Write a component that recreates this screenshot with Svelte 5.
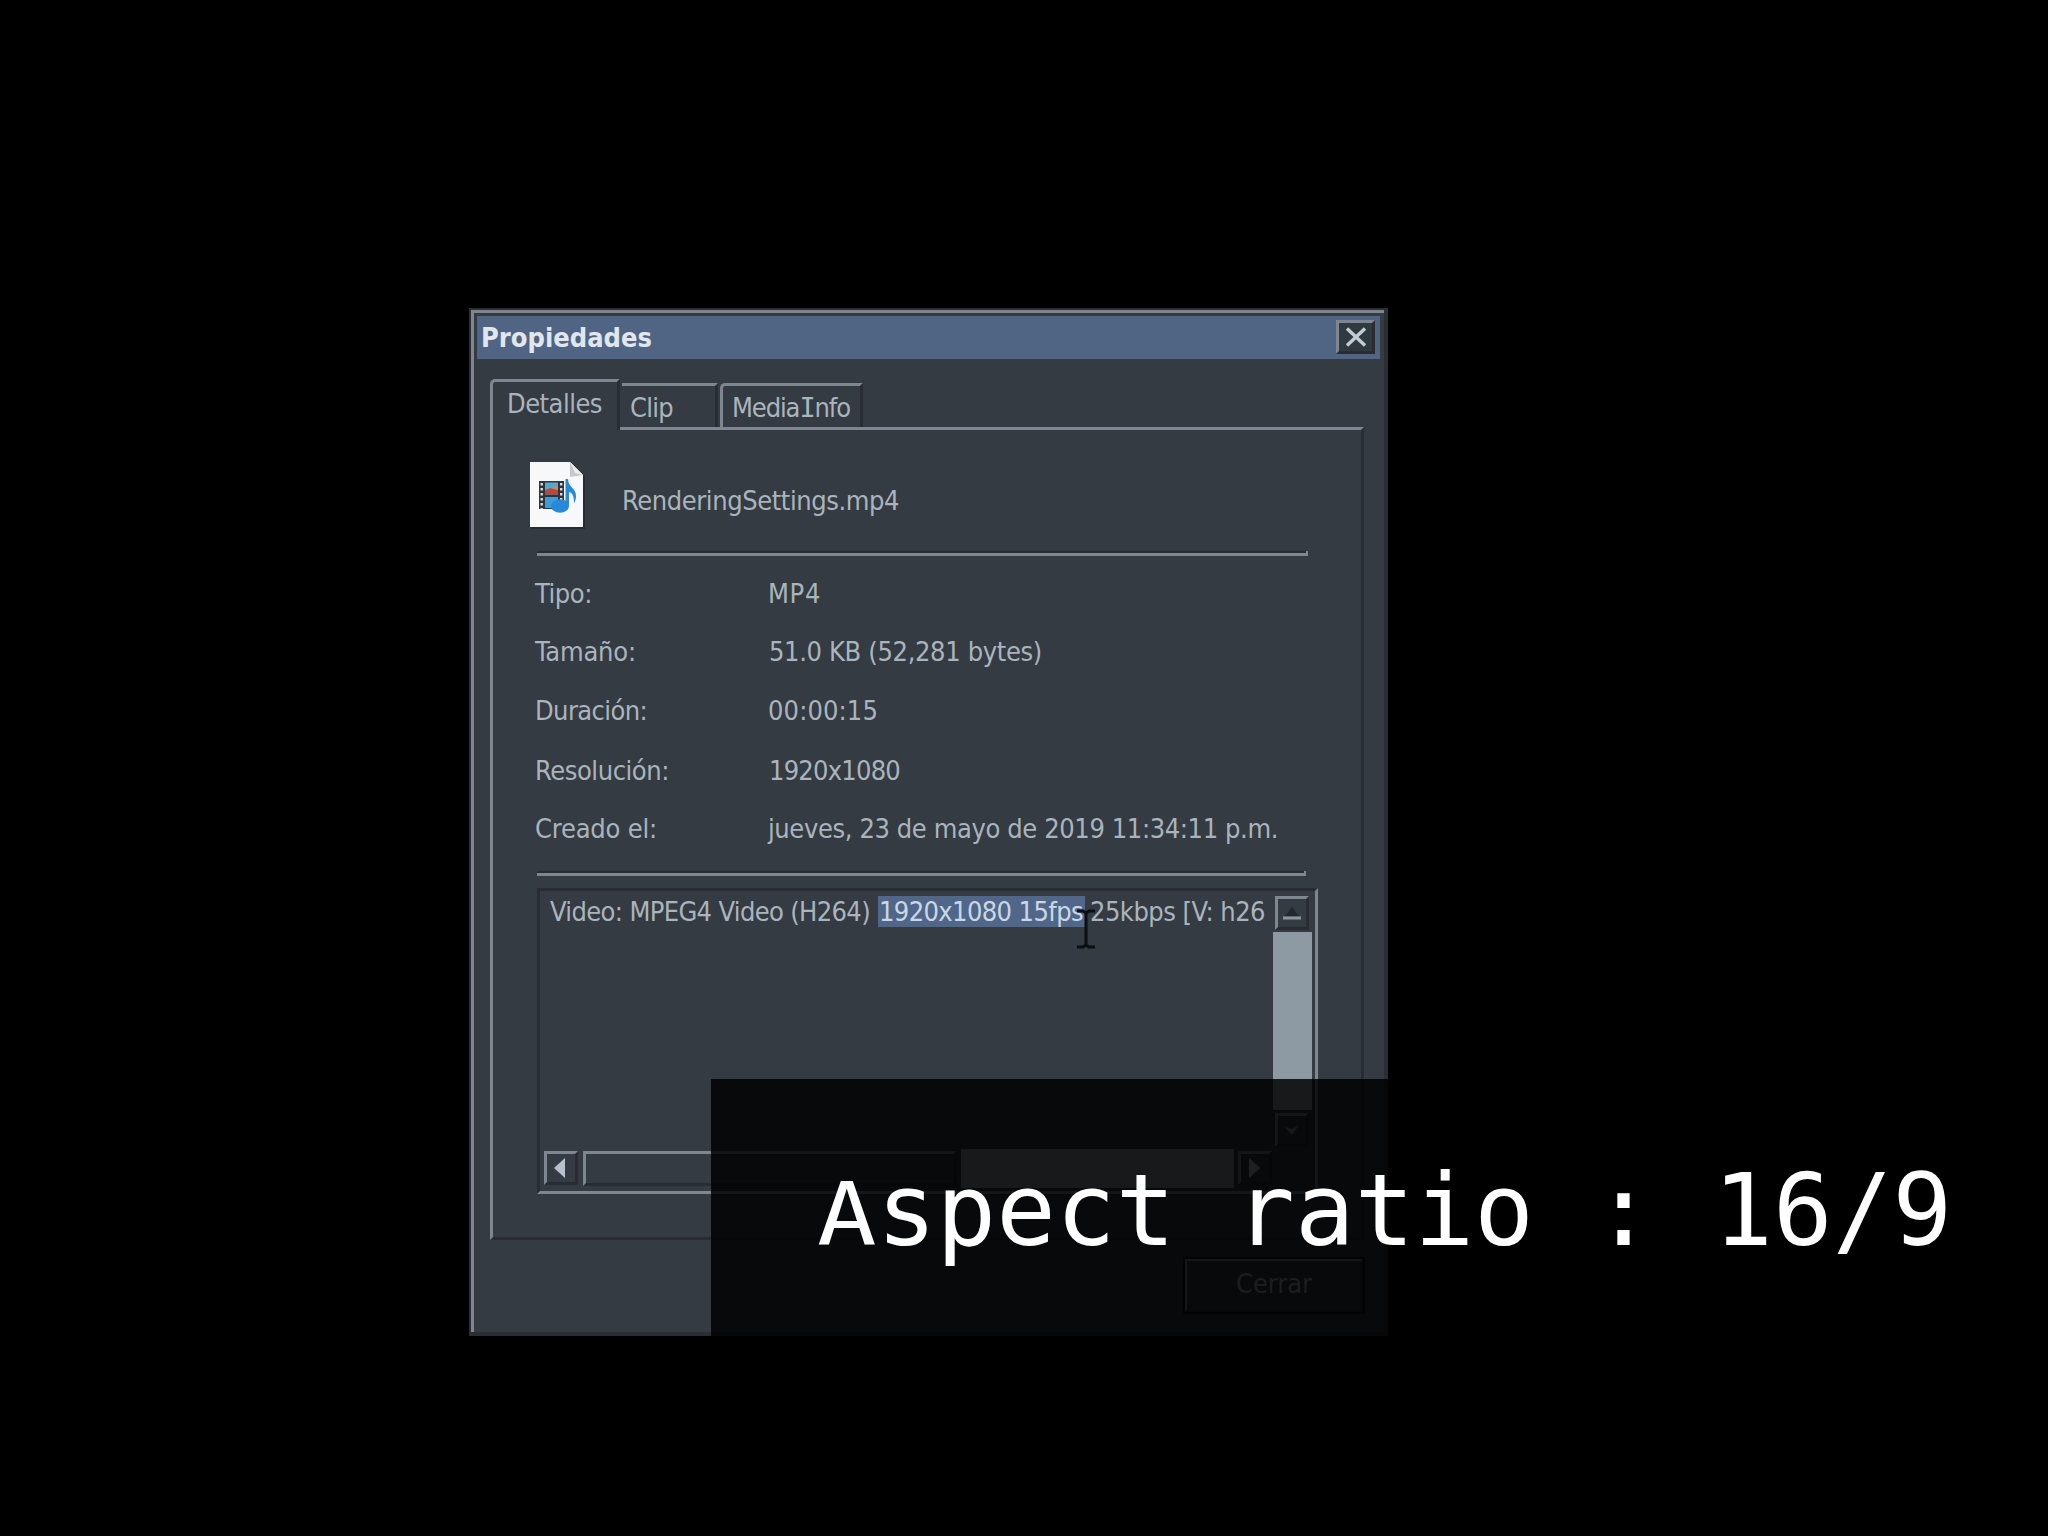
<script>
  const rows = [
    { label: 'Tipo:', lw: 57, value: 'MP4', vw: 53, inset: false, height: 58 },
    { label: 'Tamaño:', lw: 101, value: '51.0 KB (52,281 bytes)', vw: 273, inset: true, height: 59 },
    { label: 'Duración:', lw: 112, value: '00:00:15', vw: 110, inset: false, height: 60 },
    { label: 'Resolución:', lw: 134, value: '1920x1080', vw: 131, inset: true, height: 58 },
    { label: 'Creado el:', lw: 122, value: 'jueves, 23 de mayo de 2019 11:34:11 p.m.', vw: 510, inset: false, height: 57 }
  ];

  // Spreads the letters so that the text takes the given advance width.
  function fit(node, width) {
    const count = node.textContent.length;
    node.style.letterSpacing = '0px';
    const natural = node.getBoundingClientRect().width;
    node.style.letterSpacing = `${(width - natural) / count}px`;
  }
</script>

<main class="stage">
  <section class="window">
    <div class="frame">
      <header class="titlebar">
        <strong use:fit={171}>Propiedades</strong>
        <button class="close" aria-label="Cerrar ventana">
          <svg width="22" height="20" viewBox="0 0 22 20">
            <path d="M2 1.5 20 18.5M20 1.5 2 18.5" stroke="#c3ccd6" stroke-width="3.4" />
          </svg>
        </button>
      </header>

      <nav class="tabs">
        <div class="tab active"><span use:fit={95}>Detalles</span></div>
        <div class="tab clip"><span use:fit={43}>Clip</span></div>
        <div class="tab media"><span use:fit={118}>Media<span class="serif">I</span>nfo</span></div>
      </nav>

      <div class="panel">
        <div class="file">
          <svg class="file-icon" width="58" height="70" viewBox="0 0 58 70">
            <path d="M2 2H43L56 15V68H2Z" fill="#20262c" opacity=".7" />
            <path d="M1 1H41L54 14V66H1Z" fill="#f7f8f9" />
            <path d="M41 1 54 14 41 16Z" fill="#c5c8cb" />
            <path d="M41 1 54 14 46 12Z" fill="#ecedee" />
            <rect x="10" y="20" width="25" height="28" fill="#30353b" />
            <rect x="16" y="21.5" width="13" height="12" fill="#55a9cf" />
            <path d="M16 29 21 27 29 29V33.5H16Z" fill="#b9483c" />
            <path d="M22 27 29 25V29Z" fill="#d58a4a" />
            <rect x="16" y="36" width="13" height="11" fill="#3f9bdc" />
            <path d="M12.7 22V48M32.2 22V40" stroke="#d9dcde" stroke-width="2.4" stroke-dasharray="2.5 2.5" />
            <ellipse cx="31" cy="45" rx="9" ry="6.8" fill="#2789d8" />
            <path d="M36.5 46V18H39C39 26 47 27 47 35C47 38 46 41 45 42C45 36 44 32 40 31V46Z" fill="#2789d8" />
          </svg>
          <span class="filename"><span use:fit={277}>RenderingSettings.mp4</span></span>
        </div>

        <div class="rule"></div>

        <div class="details">
          {#each rows as row}
            <div class="row" style="height: {row.height}px">
              <div class="label"><span use:fit={row.lw}>{row.label}</span></div>
              <div class:nudged={row.inset}><span use:fit={row.vw}>{row.value}</span></div>
            </div>
          {/each}
        </div>

        <div class="rule second"></div>

        <div class="textbox">
          <div class="line">
            <span class="before"><span use:fit={320}>Video: MPEG4 Video (H264)</span></span>
            <mark><span use:fit={204}>1920x1080 15fps</span></mark>
            <span class="after"><span use:fit={175}>25kbps [V: h26</span></span>
          </div>
          <div class="vscroll">
            <div class="arrow">
              <svg width="20" height="16" viewBox="0 0 20 16">
                <path d="M3 11 10 2 17 11Z" fill="#23282f" />
                <path d="M1 13H19" stroke="#8d969e" stroke-width="3" />
              </svg>
            </div>
            <div class="vthumb"></div>
            <div class="arrow">
              <svg width="20" height="16" viewBox="0 0 20 16">
                <path d="M3 5 10 13 17 3 10 7Z" fill="#8d969e" />
              </svg>
            </div>
          </div>
          <div class="hscroll">
            <div class="arrow">
              <svg width="14" height="20" viewBox="0 0 14 20"><path d="M12 0V20L1 10Z" fill="#b7c1cd" /></svg>
            </div>
            <div class="track"></div>
            <div class="hthumb"></div>
            <div class="arrow">
              <svg width="14" height="20" viewBox="0 0 14 20"><path d="M2 0V20L13 10Z" fill="#b7c1cd" /></svg>
            </div>
          </div>
        </div>
      </div>

      <footer>
        <button class="dismiss"><span use:fit={76}>Cerrar</span></button>
      </footer>
    </div>
  </section>

  <svg class="cursor" width="20" height="40" viewBox="0 0 20 40">
    <path d="M1 2H7L10 4L13 2H19M10 3V37M1 38H7L10 36L13 38H19" fill="none" stroke="#0b0f13" stroke-width="3" />
  </svg>

  <div class="caption"><span class="cap">A</span>spect ratio : 16/9</div>
</main>

<style>
  :global(body) {
    background: #000;
    overflow: hidden;
  }

  * {
    box-sizing: border-box;
  }

  .stage {
    --face: #343b43;
    --light: #7e8790;
    --dark: #292c32;
    position: relative;
    width: 2048px;
    height: 1536px;
    padding: 308px 0 0 469px;
    background: #000;
    color: #aab4bc;
    font: 27px/30px 'DejaVu Sans Condensed', 'DejaVu Sans', sans-serif;
    overflow: hidden;
  }

  span,
  strong {
    white-space: nowrap;
  }

  .window {
    width: 919px;
    height: 1028px;
    border: solid #2b2f34;
    border-width: 2px 4px 4px 2px;
  }

  .frame {
    height: 100%;
    border: solid var(--light);
    border-width: 3px 0 0 3px;
    background: var(--face);
    display: flex;
    flex-direction: column;
  }

  button {
    padding: 0;
    font: inherit;
    color: inherit;
    border: solid;
    border-radius: 0;
    background: var(--face);
    border-color: var(--light) var(--dark) var(--dark) var(--light);
  }

  .titlebar {
    height: 43px;
    margin: 3px 4px 0 3px;
    padding: 0 5px 0 4px;
    background: #506584;
    display: flex;
    justify-content: space-between;
    align-items: flex-start;
    color: #e2e7ec;
    flex: none;
  }

  .titlebar strong {
    margin-top: 7px;
  }

  .close {
    width: 39px;
    height: 34px;
    margin-top: 4px;
    border-width: 3px;
    display: grid;
    place-items: center;
    background: #303840;
  }

  .tabs {
    display: flex;
    align-items: flex-end;
    height: 48px;
    margin: 20px 0 0 16px;
    flex: none;
  }

  .tab {
    height: 44px;
    border: solid;
    border-width: 3px 3px 0 3px;
    border-color: var(--light) var(--dark) transparent var(--light);
    padding-top: 7px;
  }

  .active {
    position: relative;
    width: 130px;
    height: 51px;
    margin-bottom: -3px;
    padding: 7px 0 0 14px;
    background: var(--face);
    border-top-left-radius: 5px;
  }

  .clip {
    width: 96px;
    margin-left: 2px;
    padding-left: 8px;
    border-left-width: 0;
  }

  .media {
    width: 143px;
    margin-left: 2px;
    padding-left: 9px;
    border-top-left-radius: 5px;
  }

  .serif {
    font-family: 'DejaVu Sans Mono', monospace;
    font-stretch: normal;
  }

  .panel {
    width: 874px;
    height: 813px;
    margin-left: 16px;
    border: 3px solid;
    border-color: var(--light) var(--dark) var(--dark) var(--light);
    padding-left: 44px;
    flex: none;
  }

  .file {
    display: flex;
    height: 121px;
    margin-left: -8px;
    padding-top: 31px;
  }

  .filename {
    margin: 25px 0 0 35px;
  }

  .rule {
    width: 771px;
    height: 5px;
    border: solid var(--light);
    border-width: 0 2px 3px 0;
    box-shadow: inset 0 2px var(--dark);
  }

  .second {
    width: 769px;
  }

  .details {
    padding-top: 23px;
    margin-left: -2px;
  }

  .row {
    display: grid;
    grid-template-columns: 233px 1fr;
  }

  .nudged {
    padding-left: 1px;
  }

  .textbox {
    width: 781px;
    height: 306px;
    margin-top: 12px;
    border: 3px solid;
    border-color: var(--dark) var(--light) var(--light) var(--dark);
    display: grid;
    grid-template: 257px 43px / 733px 42px;
  }

  .line {
    display: flex;
    height: 31px;
    margin-top: 5px;
    line-height: 32px;
  }

  .before {
    width: 338px;
    padding-left: 10px;
  }

  mark {
    width: 207px;
    padding-left: 1px;
    background: #50678a;
    color: #cbd7e4;
  }

  .after {
    padding-left: 5px;
  }

  .arrow {
    width: 34px;
    height: 34px;
    border: 3px solid;
    border-color: var(--light) var(--dark) var(--dark) var(--light);
    display: grid;
    place-items: center;
    flex: none;
  }

  .vscroll {
    display: flex;
    flex-direction: column;
    padding-top: 5px;
  }

  .vscroll .arrow {
    margin-left: 2px;
  }

  .vthumb {
    width: 39px;
    height: 178px;
    margin: 2px 0 3px;
    background: #8d99a3;
  }

  .hscroll {
    grid-column: 1 / 3;
    display: flex;
    align-items: center;
    height: 40px;
    padding-left: 4px;
  }

  .hscroll .arrow svg {
    margin-left: -3px;
  }

  .track {
    width: 374px;
    height: 35px;
    margin-left: 5px;
    border: 3px solid;
    border-color: var(--light) var(--dark) var(--dark) var(--light);
  }

  .hthumb {
    width: 273px;
    height: 39px;
    margin: 0 4px;
    background: #8d99a3;
  }

  footer {
    padding: 18px 20px 0 0;
    display: flex;
    justify-content: flex-end;
  }

  .dismiss {
    width: 180px;
    height: 55px;
    border-width: 3px;
    outline: 2px solid #111417;
    outline-offset: -1px;
    padding-bottom: 3px;
  }

  .cursor {
    position: absolute;
    left: 1076px;
    top: 909px;
  }

  .caption {
    position: absolute;
    left: 711px;
    top: 1079px;
    width: 1337px;
    height: 257px;
    padding-left: 106px;
    background: rgba(0, 0, 0, 0.84);
    color: #fff;
    font: 99px/264px 'DejaVu Sans Mono', monospace;
    letter-spacing: 0.15px;
  }

  .cap {
    display: inline-block;
    line-height: 1;
    transform: scaleY(0.88);
    transform-origin: 50% 85%;
  }
</style>
